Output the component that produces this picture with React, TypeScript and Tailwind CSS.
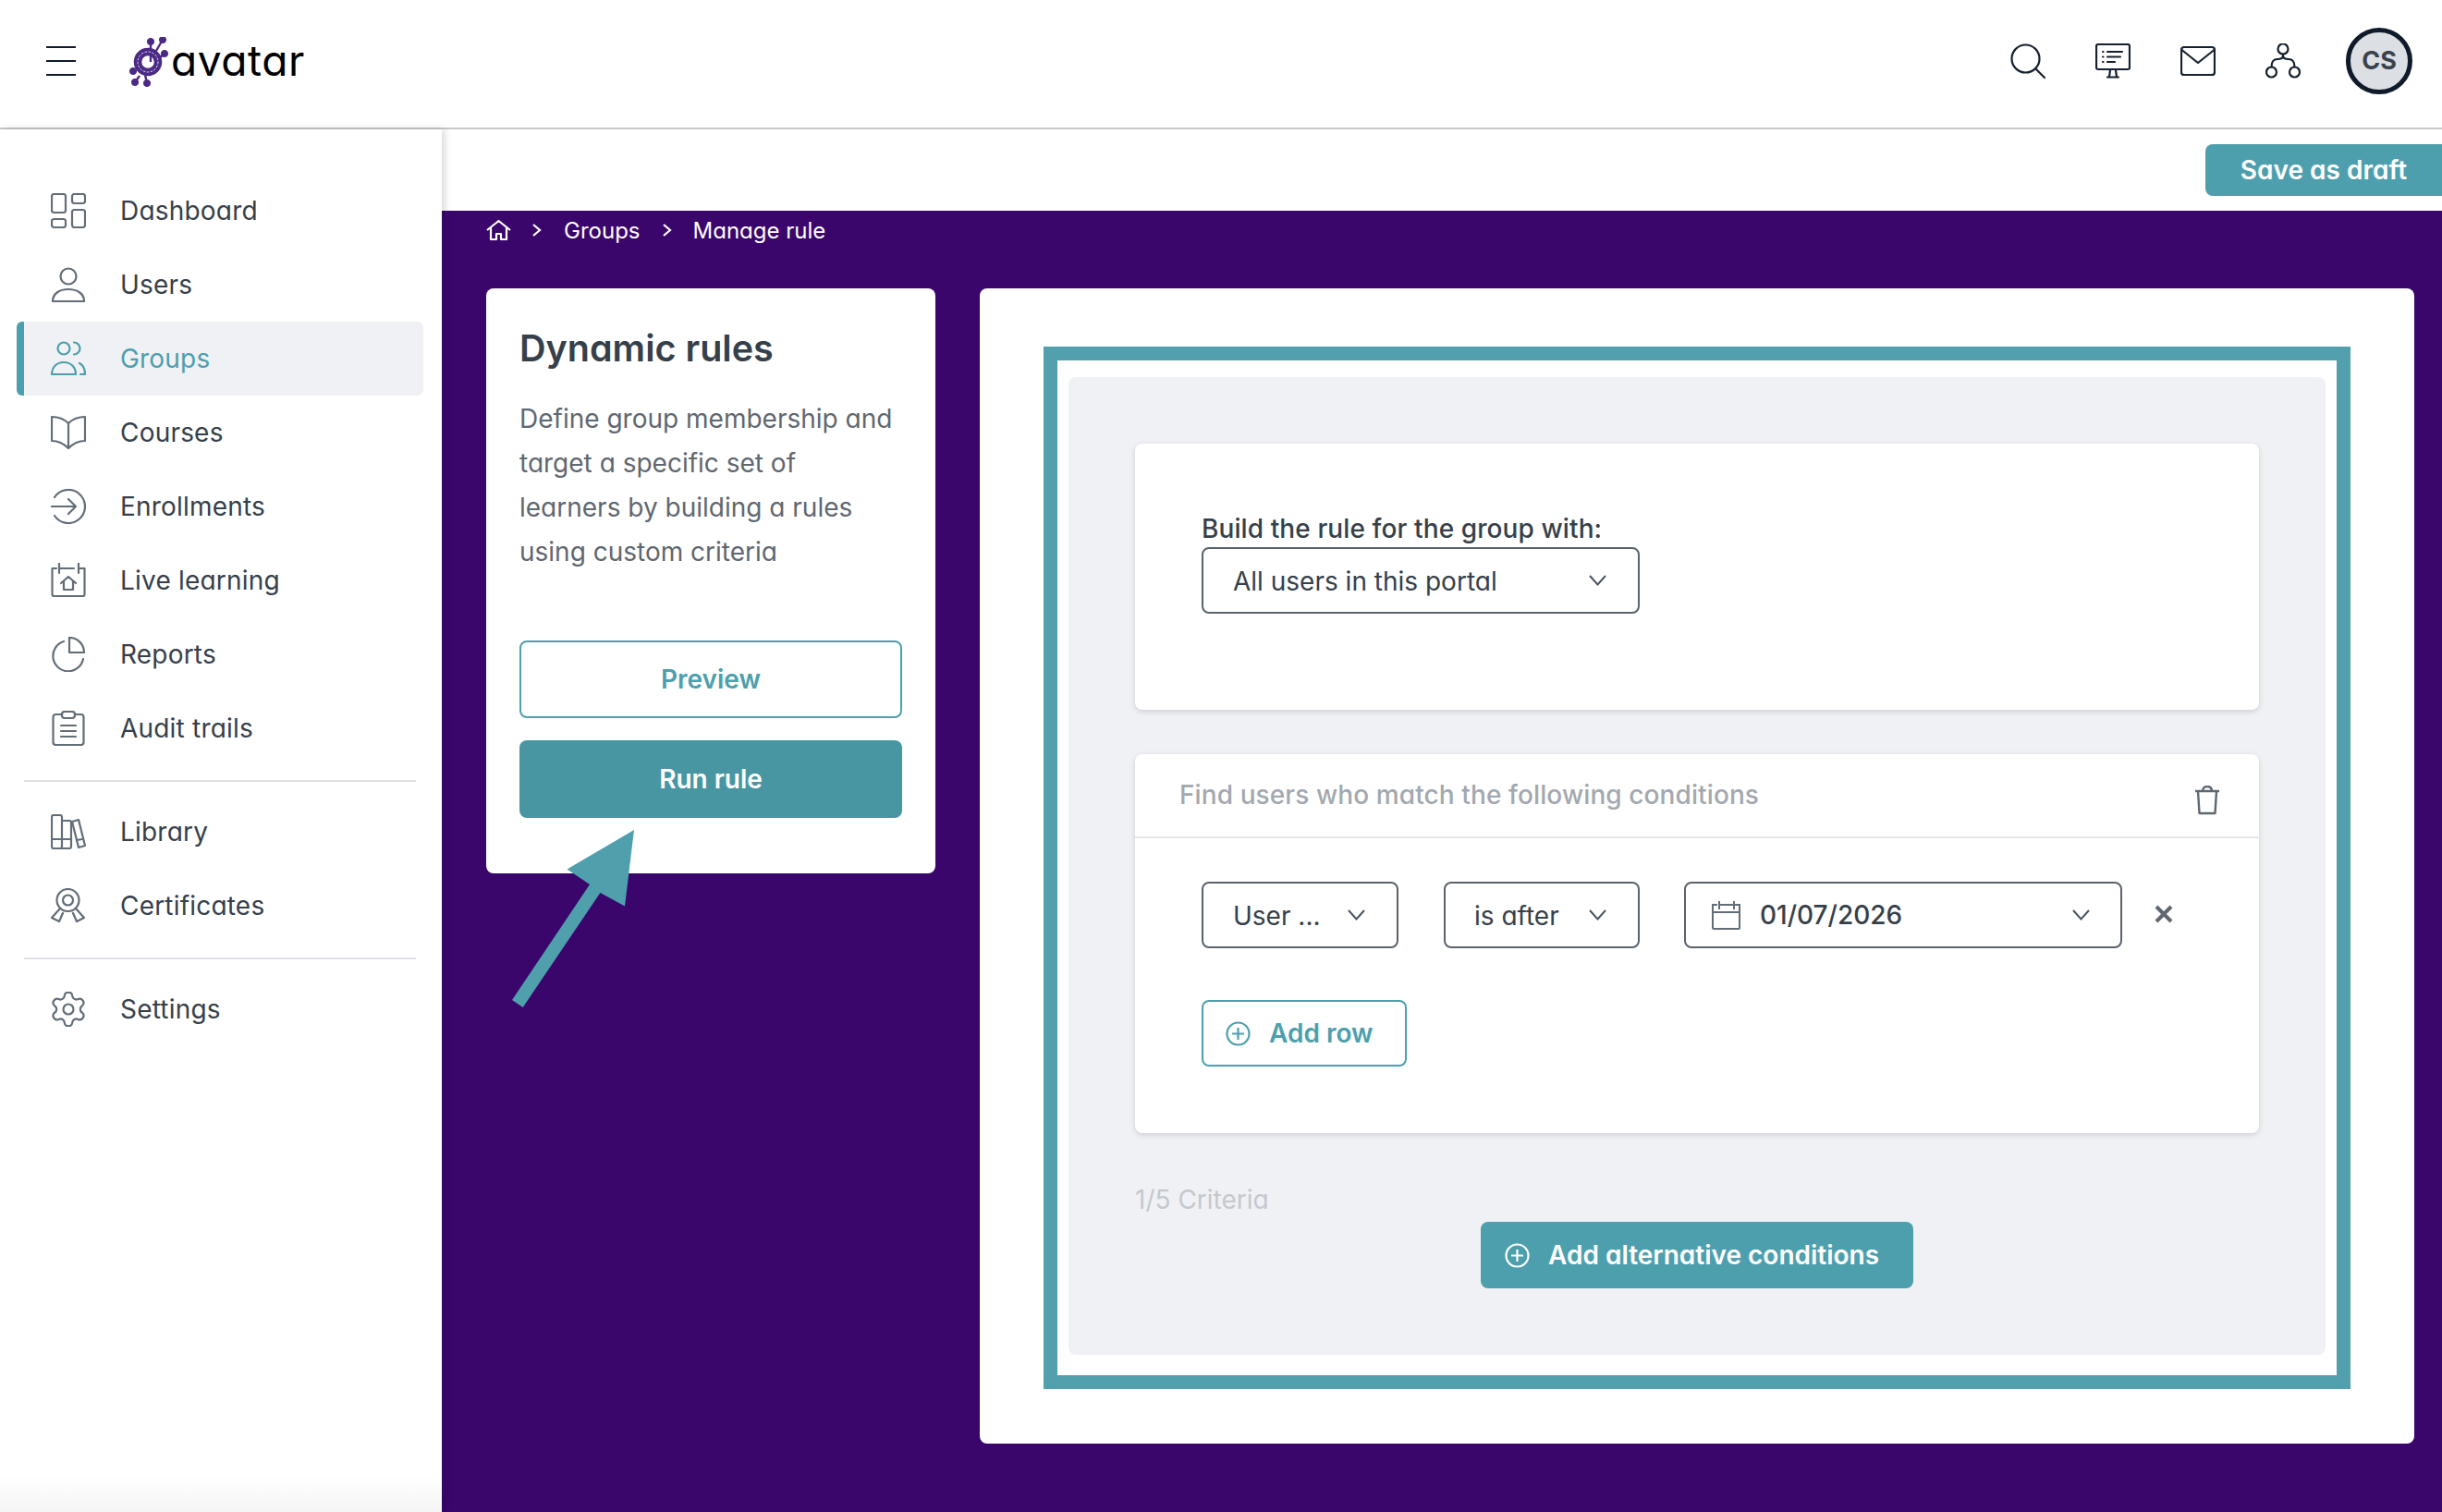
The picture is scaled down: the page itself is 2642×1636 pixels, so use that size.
import type { ReactNode } from 'react'
import { Settings } from 'lucide-react'

function Ico({ children, className = 'text-[#636d78]' }: { children: ReactNode; className?: string }) {
  return (
    <svg
      viewBox="0 0 38 38"
      fill="none"
      stroke="currentColor"
      strokeWidth={2.2}
      strokeLinecap="round"
      strokeLinejoin="round"
      className={`w-[38px] h-[38px] shrink-0 ${className}`}
    >
      {children}
    </svg>
  )
}

const navTop: { label: string; active?: boolean; icon: ReactNode }[] = [
  {
    label: 'Dashboard',
    icon: (
      <>
        <rect x="1" y="1" width="15" height="20" rx="2.5" />
        <rect x="23" y="1" width="14" height="10" rx="2.5" />
        <rect x="1" y="28" width="15" height="9" rx="2.5" />
        <rect x="23" y="18" width="14" height="19" rx="2.5" />
      </>
    ),
  },
  {
    label: 'Users',
    icon: (
      <>
        <circle cx="19" cy="10" r="8.5" />
        <path d="M2 37c0-8 7-13 17-13s17 5 17 13z" />
      </>
    ),
  },
  {
    label: 'Groups',
    active: true,
    icon: (
      <>
        <circle cx="14" cy="8" r="6.5" />
        <path d="M25 1.5a6.5 6.5 0 0 1 0 13" />
        <path d="M1 36c0-8 5.500-13 13-13s13 5 13 13z" />
        <path d="M31 24c4 2 6 6 6 12h-5" />
      </>
    ),
  },
  {
    label: 'Courses',
    icon: (
      <>
        <path d="M19 9C14 4 7 2 1 2v26c7 0 13 3 18 8 5-5 11-8 18-8V2c-6 0-13 2-18 7z" />
        <path d="M19 9v27" />
      </>
    ),
  },
  {
    label: 'Enrollments',
    icon: (
      <>
        <path d="M4 9a18 18 0 1 1 0 20" />
        <path d="M1 19h26M19 11l8 8-8 8" />
      </>
    ),
  },
  {
    label: 'Live learning',
    icon: (
      <>
        <path d="M6 6H1.500v28a2 2 0 0 0 2 2h31a2 2 0 0 0 2-2V6H31" />
        <path d="M9 1v10M30 1v10M9 6h16" />
        <path d="M11 22l8-7 8 7M14 20v9h10v-9" />
      </>
    ),
  },
  {
    label: 'Reports',
    icon: (
      <>
        <path d="M20 1c9 0 16 7 16 16H20z" />
        <path d="M14 5a16.500 16.500 0 1 0 21 19" />
      </>
    ),
  },
  {
    label: 'Audit trails',
    icon: (
      <>
        <rect x="2.500" y="4" width="33" height="33" rx="3" />
        <rect x="12" y="1" width="14" height="7" rx="3" fill="white" />
        <path d="M11 16h16M11 22h16M11 28h16" />
      </>
    ),
  },
]

const navLibrary: { label: string; icon: ReactNode }[] = [
  {
    label: 'Library',
    icon: (
      <>
        <rect x="1" y="1" width="11" height="36" rx="2" />
        <path d="M12 7h8a2 2 0 0 1 2 2v26a2 2 0 0 1-2 2h-8" />
        <path d="M1 27h21" />
        <path d="M23 8l7-2 7 28-7 2z" />
        <path d="M28 28l6-1" />
      </>
    ),
  },
  {
    label: 'Certificates',
    icon: (
      <>
        <circle cx="18.500" cy="13" r="12" />
        <circle cx="18.500" cy="13" r="5.500" />
        <path d="M10 22L1 32l8 4 4-9" />
        <path d="M27 22l9 10-8 4-4-9" />
      </>
    ),
  },
]

function NavRow({ label, icon, active }: { label: string; icon: ReactNode; active?: boolean }) {
  return (
    <div
      className={`ml-[18px] w-[440px] h-[80px] flex items-center gap-[37px] pl-[29px] border-l-8 rounded-[6px] ${
        active ? 'bg-[#f0f1f5] border-[#4c9fae] text-[#4c9fae]' : 'border-transparent text-[#36404a]'
      }`}
    >
      <Ico className={active ? 'text-[#4c9fae]' : 'text-[#636d78]'}>{icon}</Ico>
      <span className="text-[28px] leading-none tracking-[0.2px] -mt-[1px]">{label}</span>
    </div>
  )
}

function Chevron() {
  return (
    <svg viewBox="0 0 19 12" fill="none" stroke="#4a5560" strokeWidth={2} className="w-[19px] h-[12px] shrink-0">
      <path d="M1 1l8.500 9.500L18 1" />
    </svg>
  )
}

function PlusCircle({ className }: { className: string }) {
  return (
    <svg viewBox="0 0 27 27" fill="none" stroke="currentColor" strokeWidth={2.2} className={`w-[27px] h-[27px] shrink-0 ${className}`}>
      <circle cx="13.500" cy="13.500" r="12" />
      <path d="M13.500 7v13M7 13.500h13" />
    </svg>
  )
}

function Logo() {
  return (
    <svg viewBox="0 0 44 54" className="w-[44px] h-[54px] shrink-0" fill="#4b2a85" stroke="#4b2a85">
      <path d="M24 27L24 5M27 20L37 3M32 24L39 18M8 36L5 37M12 42L7 49M18 41L20 50" strokeWidth={2.4} fill="none" />
      <circle cx="24" cy="5" r="3.600" />
      <circle cx="37" cy="3" r="3.600" />
      <circle cx="39" cy="18" r="3.600" />
      <circle cx="5" cy="37" r="3.600" />
      <circle cx="7" cy="49" r="3.600" />
      <circle cx="20" cy="50" r="3.600" />
      <circle cx="21" cy="27" r="11" fill="none" strokeWidth={8.500} />
      <circle cx="21" cy="27" r="11" fill="none" stroke="white" strokeWidth={0.8} strokeDasharray="2.500 1.500" />
    </svg>
  )
}

export default function App() {
  return (
    <div className="relative w-screen h-screen overflow-hidden flex flex-col bg-white [font-family:Inter,'Liberation_Sans',sans-serif] [font-feature-settings:'cv11'_1]">
      {/* Top header */}
      <header className="h-[140px] shrink-0 flex items-center pl-[50px] pr-[32px] pb-[6px] border-b-2 border-[#c9c9c9] bg-white">
        <div className="w-[32px] flex flex-col gap-[13px]">
          <div className="h-[2px] bg-[#0f1a2a]" />
          <div className="h-[2px] bg-[#0f1a2a]" />
          <div className="h-[2px] bg-[#0f1a2a]" />
        </div>
        <div className="ml-[57px] flex items-center gap-[2px] mt-[2px]">
          <Logo />
          <span className="text-[46px] leading-none text-black tracking-[0.6px] -mt-[4px]">avatar</span>
        </div>
        <div className="ml-auto flex items-center gap-[54px]">
          <Ico className="text-[#16202e]">
            <circle cx="16.500" cy="16.500" r="15" />
            <path d="M27.500 27.500L37 37" />
          </Ico>
          <Ico className="text-[#16202e]">
            <rect x="1" y="1" width="36" height="27" rx="2" />
            <path d="M13 36.500h12M16 29l-1 7M22 29l1 7" />
            <path d="M13 9h16M13 14.500h14M13 20h8M8 9h.5M8 14.500h.5M8 20h.5" />
          </Ico>
          <Ico className="text-[#16202e]">
            <rect x="1" y="4" width="36" height="30" rx="3" />
            <path d="M1.500 7L19 21 36.500 7" />
          </Ico>
          <Ico className="text-[#16202e]">
            <circle cx="19" cy="6" r="5.500" />
            <circle cx="6.500" cy="31" r="5.500" />
            <circle cx="31.500" cy="31" r="5.500" />
            <path d="M19 11.500v2c0 2.500-3 3.500-6 3.500-4 0-6.500 3-6.500 8.500M19 13.500c0 2.500 3 3.500 6 3.500 4 0 6.500 3 6.500 8.500" />
          </Ico>
          <div className="-ml-[5px] w-[72px] h-[72px] rounded-full border-[5px] border-[#0f1a2a] bg-[#dcdfe3] flex items-center justify-center text-[27px] font-bold text-[#3a434d]">
            CS
          </div>
        </div>
      </header>

      <div className="flex flex-1 min-h-0">
        {/* Sidebar */}
        <aside className="w-[478px] shrink-0 relative z-10 bg-white pt-[48px] shadow-[3px_0_8px_rgba(0,0,0,0.16)]">
          {navTop.map((n) => (
            <NavRow key={n.label} {...n} />
          ))}
          <div className="ml-[26px] w-[424px] h-[2px] bg-[#dde1e5] mt-[16px] mb-[14px]" />
          {navLibrary.map((n) => (
            <NavRow key={n.label} {...n} />
          ))}
          <div className="ml-[26px] w-[424px] h-[2px] bg-[#dde1e5] mt-[16px] mb-[14px]" />
          <NavRow
            label="Settings"
            icon={<Settings size={44} x={-3} y={-3} strokeWidth={1.2} />}
          />
          <div className="absolute inset-x-0 bottom-0 h-[40px] bg-gradient-to-b from-white to-[#f5f5f5]" />
        </aside>

        <main className="flex-1 min-w-0 flex flex-col">
          <div className="h-[88px] shrink-0 bg-white flex justify-end pt-[16px]">
            <button className="w-[256px] h-[56px] bg-[#4e9fae] text-white rounded-l-[8px] text-[28px] font-semibold leading-none">
              Save as draft
            </button>
          </div>

          <div className="flex-1 bg-[#3a066c] pl-[48px] pr-[30px]">
            {/* Breadcrumb */}
            <div className="h-[42px] flex items-center text-white text-[24px] leading-none">
              <svg viewBox="0 0 27 24" fill="none" stroke="white" strokeWidth={2.2} strokeLinejoin="round" className="w-[27px] h-[24px]">
                <path d="M1 12L13.500 2 26 12M5 9.500V22h6v-6h5v6h6V9.500" />
              </svg>
              <svg viewBox="0 0 10 14" fill="none" stroke="white" strokeWidth={2.2} className="w-[10px] h-[14px] ml-[23px]">
                <path d="M1 1l7 6-7 6" />
              </svg>
              <span className="ml-[24px] mt-[1px]">Groups</span>
              <svg viewBox="0 0 10 14" fill="none" stroke="white" strokeWidth={2.2} className="w-[10px] h-[14px] ml-[24px]">
                <path d="M1 1l7 6-7 6" />
              </svg>
              <span className="ml-[23px] mt-[1px]">Manage rule</span>
            </div>

            <div className="mt-[42px] flex gap-[48px] items-start">
              {/* Left card */}
              <section className="w-[486px] h-[633px] shrink-0 bg-white rounded-[8px] pl-[36px] pr-[36px] pt-[45px]">
                <h1 className="text-[39.5px] leading-[40px] font-semibold text-[#36404a]">Dynamic rules</h1>
                <p className="mt-[32px] text-[28px] leading-[48px] text-[#5f6770]">
                  Define group membership and target a specific set of learners by building a rules using custom criteria
                </p>
                <button className="mt-[72px] w-[414px] h-[84px] bg-white border-2 border-[#4d9fae] rounded-[8px] text-[#4d9fae] text-[28px] font-semibold">
                  Preview
                </button>
                <button className="mt-[24px] w-[414px] h-[84px] bg-[#4996a3] rounded-[8px] text-white text-[28px] font-semibold">
                  Run rule
                </button>
              </section>

              {/* Main card */}
              <section className="flex-1 h-[1250px] bg-white rounded-[8px] pl-[69px] pr-[69px] pt-[63px]">
                <div className="h-[1128px] border-[15px] border-[#52a0ae] px-[12px] pt-[18px]">
                  <div className="h-[1058px] bg-[#f0f1f5] rounded-[8px] px-[72px] pt-[72px]">
                    <div className="h-[288px] bg-white rounded-[8px] shadow-[0_2px_6px_rgba(0,0,0,0.14)] pl-[72px] pt-[74px]">
                      <div className="h-[38px] text-[28px] leading-[36px] font-medium tracking-[0.1px] text-[#36404a]">
                        Build the rule for the group with:
                      </div>
                      <div className="w-[474px] h-[72px] border-2 border-[#5a636d] rounded-[8px] flex items-center justify-between pl-[32px] pr-[34px] text-[28px] text-[#36404a]">
                        <span className="mt-[2px]">All users in this portal</span>
                        <Chevron />
                      </div>
                    </div>

                    <div className="mt-[48px] h-[410px] bg-white rounded-[8px] shadow-[0_2px_6px_rgba(0,0,0,0.14)]">
                      <div className="h-[91px] border-b-2 border-[#e6e7eb] pl-[48px] pr-[42px] flex items-center justify-between">
                        <span className="text-[28px] font-medium tracking-[0.1px] text-[#a3a8af] -mt-[2px]">Find users who match the following conditions</span>
                        <svg viewBox="0 0 28 32" fill="none" stroke="#5f6770" strokeWidth={2.400} strokeLinejoin="round" className="w-[28px] h-[32px] mt-[10px]">
                          <path d="M1 6h26M4 6l1.500 24h17L24 6M9 6c0-3 2-5 5-5s5 2 5 5" />
                        </svg>
                      </div>
                      <div className="pl-[72px] pt-[47px]">
                        <div className="flex items-center">
                          <div className="w-[213px] h-[72px] border-2 border-[#5a636d] rounded-[8px] flex items-center justify-between pl-[32px] pr-[34px] text-[28px] text-[#36404a]">
                            <span className="mt-[2px]">User ...</span>
                            <Chevron />
                          </div>
                          <div className="ml-[49px] w-[212px] h-[72px] border-2 border-[#5a636d] rounded-[8px] flex items-center justify-between pl-[31px] pr-[34px] text-[28px] text-[#36404a]">
                            <span className="mt-[2px]">is after</span>
                            <Chevron />
                          </div>
                          <div className="ml-[48px] w-[474px] h-[72px] border-2 border-[#5a636d] rounded-[8px] flex items-center pl-[28px] pr-[33px] text-[28px] text-[#36404a]">
                            <svg viewBox="0 0 31 32" fill="none" stroke="#636d78" strokeWidth={2} className="w-[31px] h-[32px] shrink-0">
                              <path d="M6 5H1v25a1 1 0 0 0 1 1h27a1 1 0 0 0 1-1V5h-5M8 1v9M24 1v9M8 5h16M1 13h29" />
                            </svg>
                            <span className="ml-[21px] font-medium">01/07/2026</span>
                            <span className="ml-auto"><Chevron /></span>
                          </div>
                          <svg viewBox="0 0 20 20" fill="none" stroke="#5f6770" strokeWidth={4} className="w-[20px] h-[20px] ml-[35px] -mt-[2px]">
                            <path d="M2 2l16 16M18 2L2 18" />
                          </svg>
                        </div>
                        <button className="mt-[56px] w-[222px] h-[72px] border-2 border-[#4d9fae] rounded-[8px] flex items-center pl-[24px] text-[#4d9fae] text-[28px] font-semibold">
                          <PlusCircle className="text-[#4d9fae]" />
                          <span className="ml-[20px]">Add row</span>
                        </button>
                      </div>
                    </div>

                    <div className="mt-[54px] h-[36px] text-[28px] leading-[36px] text-[#c5c8cd]">1/5 Criteria</div>
                    <div className="mt-[6px] flex justify-center">
                      <button className="w-[468px] h-[72px] bg-[#4e9fae] rounded-[8px] flex items-center pl-[26px] text-white text-[28px] font-semibold">
                        <PlusCircle className="text-white" />
                        <span className="ml-[20px]">Add alternative conditions</span>
                      </button>
                    </div>
                  </div>
                </div>
              </section>
            </div>
          </div>
        </main>
      </div>

      {/* Annotation arrow */}
      <svg viewBox="0 0 133 193" className="absolute left-[554px] top-[898px] w-[133px] h-[193px] z-20">
        <path d="M132 0L122 82.500 95.400 68 11.700 192 0 184 84 59 59.500 42.600z" fill="#4f9fad" />
      </svg>
    </div>
  )
}
